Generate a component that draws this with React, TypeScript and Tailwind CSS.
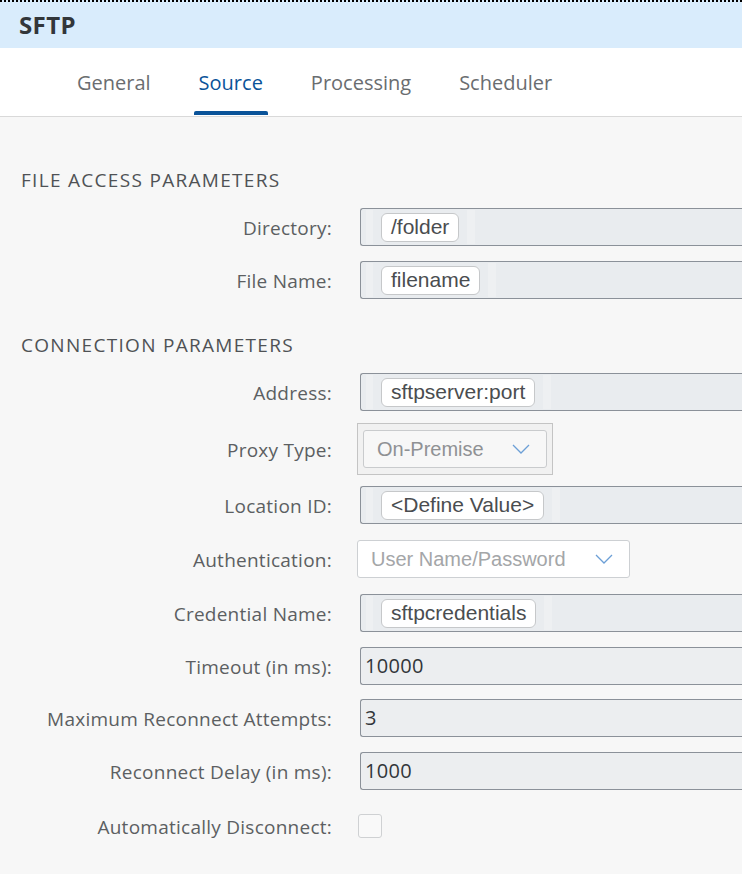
import type { ReactNode } from 'react';

const labelFont = { fontFamily: '"Open Sans", "Noto Sans", sans-serif' };
const arialFont = { fontFamily: '"Liberation Sans", Arial, sans-serif' };

function Row({ label, children, className }: { label: string; children: ReactNode; className: string }) {
  return (
    <div className={`flex items-center ${className}`}>
      <div className="w-[332px] shrink-0 text-right text-[19px] tracking-[0.25px] leading-6 text-[#5c5f62] pt-[2px]" style={labelFont}>
        {label}
      </div>
      <div className="ml-[25px] flex-1 min-w-0">{children}</div>
    </div>
  );
}

function TokenInput({ value }: { value: string }) {
  return (
    <div className="ml-[3px] h-[38px] flex items-center bg-[#e9ecef] border border-[#8b9199] rounded-l-[3px] border-r-0">
      <div className="ml-[5px] w-[7px] h-[34px] bg-[#eef0f2]" />
      <div
        className="ml-[8px] h-[29px] px-[9px] flex items-center bg-white border border-[#c6c8ca] rounded-[6px] text-[21px] text-[#4a4d50]"
        style={arialFont}
      >
        {value}
      </div>
      <div className="ml-[8px] w-[8px] h-[34px] bg-[#eef0f2]" />
    </div>
  );
}

function TextInput({ value }: { value: string }) {
  return (
    <div
      className="ml-[3px] h-[38px] flex items-center pl-[4px] bg-[#eceef0] border border-[#8b9199] rounded-l-[3px] border-r-0 text-[20px] tracking-[0.3px] text-[#32363a]"
      style={labelFont}
    >
      {value}
    </div>
  );
}

function Chevron() {
  return (
    <svg width="18" height="10" viewBox="0 0 18 10" className="shrink-0">
      <polyline points="1,1 9,9 17,1" fill="none" stroke="#6c9fd6" strokeWidth="1.3" />
    </svg>
  );
}

export default function App() {
  return (
    <div className="w-[742px] h-[874px] bg-[#f7f7f7] overflow-hidden" style={labelFont}>
      {/* title bar */}
      <div className="h-[48px] bg-[#d9ecfc] border-t-2 border-dotted border-black flex items-center px-[19px]">
        <span className="text-[24px] tracking-[0.4px] font-bold text-[#32363a] leading-none">SFTP</span>
      </div>

      {/* tabs */}
      <div className="h-[69px] bg-white border-b border-[#d9d9d9] flex items-stretch pl-[63px] gap-[20px]">
        {['General', 'Source', 'Processing', 'Scheduler'].map((t) => (
          <div key={t} className="relative flex items-center px-[14px] pt-[1px] text-[20px]">
            <span className={t === 'Source' ? 'text-[#0a5399]' : 'text-[#6a6d70]'}>{t}</span>
            {t === 'Source' && (
              <span className="absolute left-[9px] right-[9px] bottom-[1px] h-[4px] bg-[#0a5399] rounded-t-[2px]" />
            )}
          </div>
        ))}
      </div>

      {/* form */}
      <div className="flex flex-col">
        <div className="mt-[51px] pl-[21px] text-[19px] tracking-[1.3px] leading-6 text-[#4f5255] uppercase">File Access Parameters</div>
        <Row label="Directory:" className="mt-[16px]">
          <TokenInput value="/folder" />
        </Row>
        <Row label="File Name:" className="mt-[15px]">
          <TokenInput value="filename" />
        </Row>

        <div className="mt-[34px] pl-[21px] text-[19px] tracking-[1.3px] leading-6 text-[#4f5255] uppercase">Connection Parameters</div>
        <Row label="Address:" className="mt-[16px]">
          <TokenInput value="sftpserver:port" />
        </Row>
        <Row label="Proxy Type:" className="mt-[12px]">
          <div className="w-[196px] h-[52px] border border-[#c4c4c4] bg-[#f1f1f1] flex items-center justify-center">
            <div
              className="w-[184px] h-[38px] border border-[#c9cbcd] rounded-[3px] bg-[#f7f7f7] flex items-center justify-between pl-[13px] pr-[16px] text-[20px] text-[#8f9194]"
              style={arialFont}
            >
              <span>On-Premise</span>
              <Chevron />
            </div>
          </div>
        </Row>
        <Row label="Location ID:" className="mt-[11px]">
          <TokenInput value="<Define Value>" />
        </Row>
        <Row label="Authentication:" className="mt-[16px]">
          <div
            className="w-[273px] h-[38px] border border-[#cdd0d3] rounded-[3px] bg-white flex items-center justify-between pl-[13px] pr-[16px] text-[20px] text-[#a4a6a8]"
            style={arialFont}
          >
            <span>User Name/Password</span>
            <Chevron />
          </div>
        </Row>
        <Row label="Credential Name:" className="mt-[16px]">
          <TokenInput value="sftpcredentials" />
        </Row>
        <Row label="Timeout (in ms):" className="mt-[15px]">
          <TextInput value="10000" />
        </Row>
        <Row label="Maximum Reconnect Attempts:" className="mt-[14px]">
          <TextInput value="3" />
        </Row>
        <Row label="Reconnect Delay (in ms):" className="mt-[15px]">
          <TextInput value="1000" />
        </Row>
        <Row label="Automatically Disconnect:" className="mt-[23px]">
          <div className="ml-[1px] w-[24px] h-[24px] border border-[#cfd1d3] rounded-[3px] bg-[#f9f9f9]" />
        </Row>
      </div>
    </div>
  );
}
